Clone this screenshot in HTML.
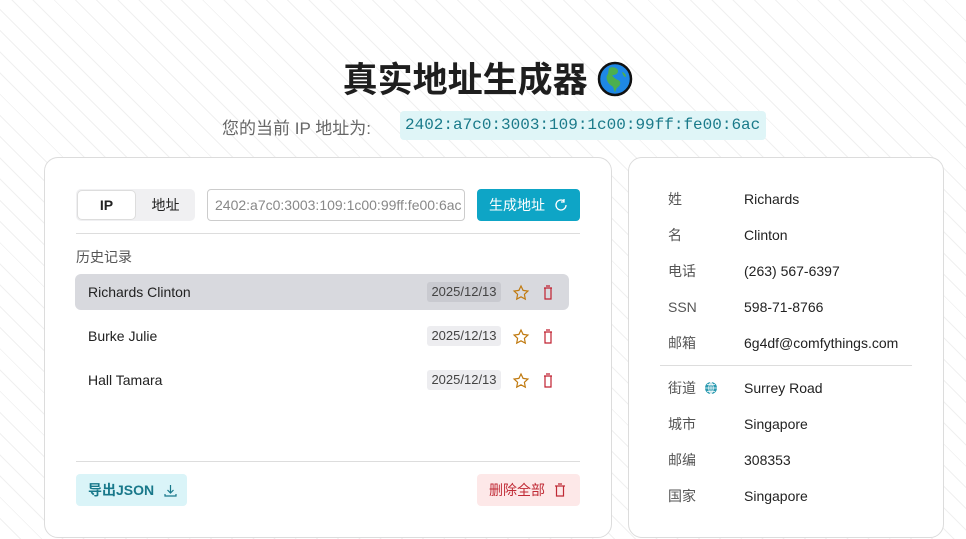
<!DOCTYPE html>
<html><head><meta charset="utf-8"><style>
*{box-sizing:border-box;margin:0;padding:0}
body{width:966px;height:539px;overflow:hidden;position:relative;font-family:"Liberation Sans","Noto Sans CJK SC",sans-serif;color:#222;
background:#fff repeating-linear-gradient(45deg,#fff 0 14px,#f0f0f0 14px 15px);}
.abs{position:absolute}
h1{position:absolute;left:0;width:966px;top:52px;text-align:center;font-size:35px;font-weight:bold;color:#1e1e1e;padding-left:10px}
.sub{position:absolute;left:222px;top:114px;font-size:17px;color:#666}
.ipb{position:absolute;left:400px;top:111px;width:366px;height:29px;background:#dff5f7;border-radius:4px;color:#1a7a8a;font-family:"Liberation Mono","DejaVu Sans Mono",monospace;font-size:16px;line-height:29px;padding-left:5px}
.card{position:absolute;background:#fff;border:1px solid #dcdcdc;border-radius:14px}
.row{position:absolute;left:75px;width:494px;height:36px;border-radius:6px;font-size:14px;line-height:36px;padding-left:13px}
.date{position:absolute;left:352px;top:8px;width:74px;height:20px;background:#ededf0;border-radius:3px;font-size:13px;line-height:20px;text-align:center;color:#444}
.kv{position:absolute;font-size:14px}
</style></head><body>
<h1>真实地址生成器 <svg width="36" height="36" viewBox="0 0 36 36" style="vertical-align:-5px"><circle cx="18" cy="18" r="16" fill="#1e88e5" stroke="#111" stroke-width="2.5"/><path d="M12 7c4-2 9 0 9 3s-3 4-5 4 2 4 5 5 3 5 0 7-2 5-3 5-1-5-3-6-4-3-5-6 0-5 1-6z" fill="#4caf50"/><path d="M25 11c3 1 4 3 4 5-2 0-3-2-4-5z" fill="#4caf50"/></svg></h1>
<div class="sub">您的当前 IP 地址为:</div>
<div class="ipb">2402:a7c0:3003:109:1c00:99ff:fe00:6ac</div>

<div class="card" style="left:44px;top:157px;width:568px;height:381px"></div>
<div class="abs" style="left:76px;top:189px;width:119px;height:32px;background:#f0f0f2;border-radius:5px"></div>
<div class="abs" style="left:77px;top:190px;width:59px;height:30px;background:#fff;border:1px solid #ddd;border-radius:5px;text-align:center;line-height:28px;font-size:14px;font-weight:bold">IP</div>
<div class="abs" style="left:136px;top:190px;width:59px;height:30px;text-align:center;line-height:30px;font-size:14px">地址</div>
<div class="abs" style="left:207px;top:189px;width:258px;height:32px;border:1px solid #ccc;border-radius:4px;font-size:14px;color:#888;line-height:30px;padding-left:7px">2402:a7c0:3003:109:1c00:99ff:fe00:6ac</div>
<div class="abs" style="left:477px;top:189px;width:103px;height:32px;background:#0ea5c6;border-radius:4px;color:#fff;font-size:14px;line-height:32px;padding-left:12px">生成地址 <svg width="14" height="14" viewBox="0 0 14 14" style="vertical-align:-2px;margin-left:5px"><path d="M12 7a5 5 0 1 1-2-4M10 1v3h-3" fill="none" stroke="#fff" stroke-width="1.3"/></svg></div>
<div class="abs" style="left:76px;top:233px;width:504px;height:1px;background:#ddd"></div>
<div class="abs" style="left:76px;top:247px;font-size:14px;color:#555">历史记录</div>

<div class="row" style="top:274px;background:#d8d9de">Richards Clinton<div class="date" style="background:#c9cad0">2025/12/13</div></div>
<div class="row" style="top:318px">Burke Julie<div class="date">2025/12/13</div></div>
<div class="row" style="top:362px">Hall Tamara<div class="date">2025/12/13</div></div>
<svg class="abs" style="left:512px;top:284px" width="60" height="110" viewBox="0 0 60 110">
<g id="r"><path d="M9 2l2.1 4.4 4.8.6-3.5 3.3.9 4.8L9 12.8 4.7 15.1l.9-4.8L2.1 7l4.8-.6z" fill="none" stroke="#c07a10" stroke-width="1.2"/><path d="M32 4h8M33 4v11h6V4M34 2h4" fill="none" stroke="#c02030" stroke-width="1.2"/></g>
<use href="#r" y="44"/><use href="#r" y="88"/></svg>

<div class="abs" style="left:76px;top:461px;width:504px;height:1px;background:#ddd"></div>
<div class="abs" style="left:76px;top:474px;width:111px;height:32px;background:#daf4f8;border-radius:4px;color:#18788a;font-size:14px;font-weight:bold;line-height:32px;padding-left:12px">导出JSON <svg width="13" height="13" viewBox="0 0 13 13" style="vertical-align:-2px;margin-left:6px"><path d="M6.5 1v8M3.5 6l3 3 3-3M1 10v2h11v-2" fill="none" stroke="#18788a" stroke-width="1.2"/></svg></div>
<div class="abs" style="left:477px;top:474px;width:103px;height:32px;background:#fde8e8;border-radius:4px;color:#c02a35;font-size:14px;line-height:32px;padding-left:12px">删除全部 <svg width="12" height="14" viewBox="0 0 12 14" style="vertical-align:-2px;margin-left:5px"><path d="M1 3h10M2.5 3v10h7V3M4 1h4" fill="none" stroke="#c02a35" stroke-width="1.2"/></svg></div>

<div class="card" style="left:628px;top:157px;width:316px;height:381px"></div>
<div class="kv" style="left:668px;top:181px;color:#555;line-height:36px">姓<br>名<br>电话<br>SSN<br>邮箱</div>
<div class="kv" style="left:744px;top:181px;line-height:36px">Richards<br>Clinton<br>(263) 567-6397<br>598-71-8766<br>6g4df@comfythings.com</div>
<div class="abs" style="left:660px;top:365px;width:252px;height:1px;background:#ddd"></div>
<div class="kv" style="left:668px;top:370px;color:#555;line-height:36px">街道<br>城市<br>邮编<br>国家</div>
<svg class="abs" style="left:704px;top:381px" width="14" height="14" viewBox="0 0 14 14"><circle cx="7" cy="7" r="6" fill="#2a9ab0"/><path d="M1 7h12M7 1v12M3 3.5h8M3 10.5h8M7 1c-3 3-3 9 0 12M7 1c3 3 3 9 0 12" fill="none" stroke="#fff" stroke-width=".8"/></svg>
<div class="kv" style="left:744px;top:370px;line-height:36px">Surrey Road<br>Singapore<br>308353<br>Singapore</div>
</body></html>
